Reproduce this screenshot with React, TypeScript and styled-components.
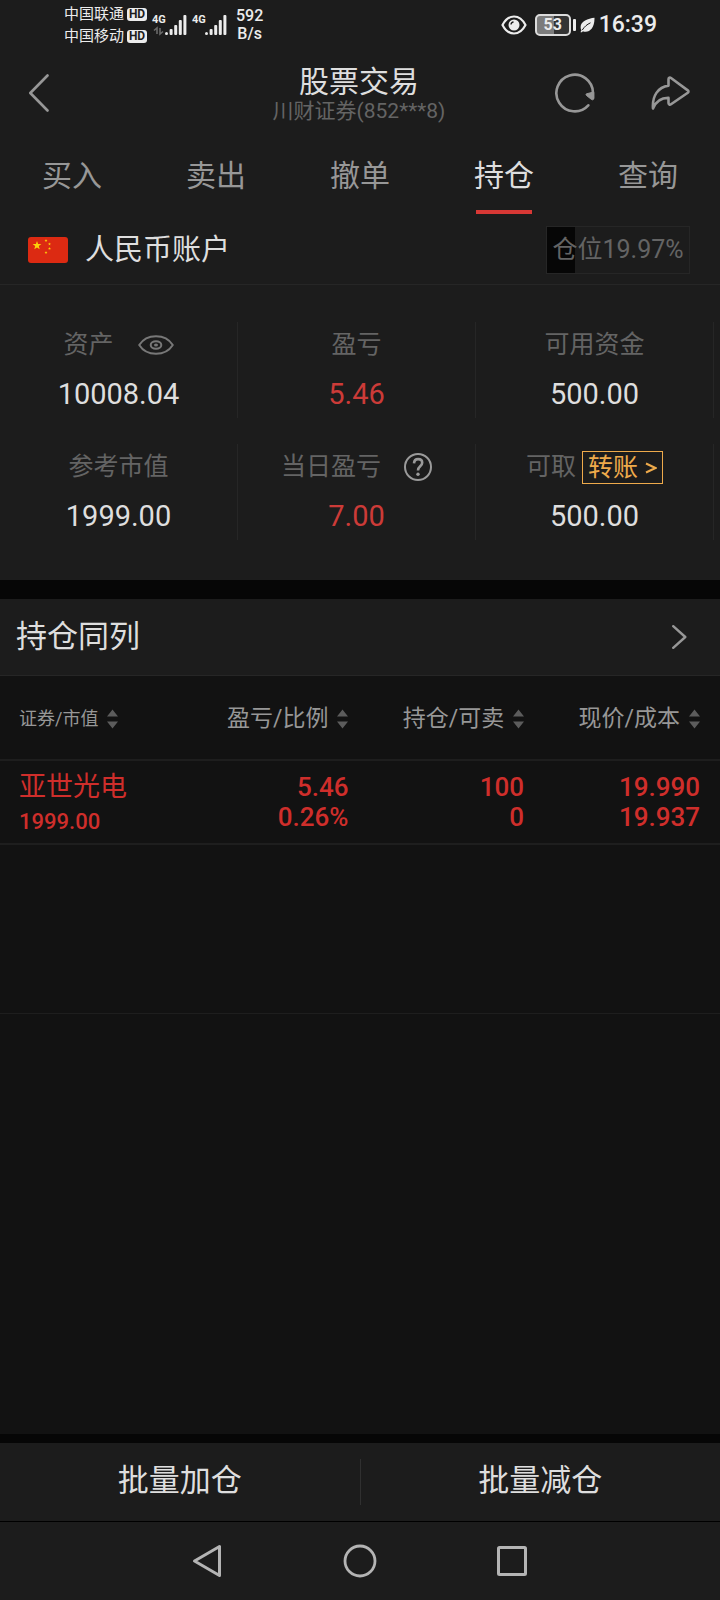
import React from "react";
import styled, { createGlobalStyle } from "styled-components";

const color = {
  panel: "#1c1c1c",
  list: "#121212",
  band: "#060606",
  line: "#262626",
  text: "#dedede",
  muted: "#979797",
  dim: "#646464",
  up: "#cc3b38",
  active: "#d83835",
  rowUp: "#cf2e2b",
  accent: "#eeaa4b",
};

const GlobalStyle = createGlobalStyle`
  *, *::before, *::after { box-sizing: border-box; }
  body {
    margin: 0;
    background: ${color.panel};
    color: ${color.text};
    font-family: Roboto, "Noto Sans CJK SC", sans-serif;
  }
  button {
    margin: 0;
    padding: 0;
    border: 0;
    background: none;
    color: inherit;
    font: inherit;
    cursor: pointer;
  }
  svg { display: block; flex: none; }
`;

const Page = styled.div`
  display: flex;
  flex-direction: column;
  min-height: 100vh;
`;

/* Status bar */

const StatusBar = styled.div`
  display: flex;
  align-items: center;
  justify-content: space-between;
  height: 50px;
  padding: 0 63px 0 64px;
  color: #ececec;
`;

const StatusGroup = styled.div<{ $gap: number }>`
  display: flex;
  align-items: center;
  gap: ${(p) => p.$gap}px;
`;

const Carriers = styled.div`
  display: flex;
  flex-direction: column;
  font-size: 15px;
  line-height: 22px;
`;

const Carrier = styled.div`
  display: flex;
  align-items: center;
  gap: 3px;
`;

const HdTag = styled.span`
  width: 20px;
  height: 13px;
  border-radius: 3px;
  background: #ececec;
  color: ${color.panel};
  font-size: 12px;
  font-weight: 700;
  line-height: 13px;
  text-align: center;
`;

const SignalBox = styled.div`
  display: flex;
`;

const NetType = styled.span`
  width: 13px;
  font-size: 11px;
  font-weight: 700;
  line-height: 12px;
`;

const Speed = styled.div`
  padding-left: 4px;
  font-size: 16px;
  font-weight: 500;
  line-height: 18px;
  text-align: center;
`;

const Battery = styled.div`
  display: flex;
  align-items: center;
  gap: 2px;

  &::after {
    content: "";
    width: 3px;
    height: 12px;
    border-radius: 1px;
    background: #ececec;
  }
`;

const BatteryBody = styled.span`
  width: 36px;
  height: 22px;
  border: 2px solid #dcdcdc;
  border-radius: 5px;
  background: linear-gradient(90deg, #7c7c7c 53%, #343434 53%);
  font-size: 16px;
  font-weight: 700;
  line-height: 18px;
  text-align: center;
`;

const Clock = styled.time`
  font-size: 23px;
  font-weight: 500;
  line-height: 28px;
`;

/* Header and tabs */

const Header = styled.header`
  display: grid;
  grid-template-columns: 1fr auto 1fr;
  align-items: center;
  height: 86px;
  padding: 0 30px 0 28px;
`;

const Heading = styled.div`
  text-align: center;
`;

const Title = styled.h1`
  margin: 0;
  font-size: 30px;
  font-weight: 400;
  line-height: 36px;
`;

const Subtitle = styled.p`
  margin: 0;
  color: ${color.dim};
  font-size: 21px;
  line-height: 22px;
`;

const HeaderActions = styled.div<{ $end?: boolean }>`
  display: flex;
  align-items: center;
  justify-content: ${(p) => (p.$end ? "flex-end" : "flex-start")};
  gap: 56px;
`;

const Tabs = styled.nav`
  display: grid;
  grid-template-columns: repeat(5, 1fr);
`;

const Tab = styled.button<{ $active: boolean }>`
  display: flex;
  flex-direction: column;
  align-items: center;
  padding-top: 20px;
  color: ${(p) => (p.$active ? color.text : color.muted)};
  font-size: 30px;
  line-height: 40px;

  &::after {
    content: "";
    width: 56px;
    height: 4px;
    margin-top: 14px;
    background: ${(p) => (p.$active ? color.active : "transparent")};
  }
`;

/* Account summary */

const AccountRow = styled.div`
  display: flex;
  align-items: center;
  gap: 17px;
  height: 71px;
  padding: 2px 30px 0 28px;
  border-bottom: 1px solid ${color.line};
`;

const AccountName = styled.h2`
  flex: 1;
  margin: 0;
  font-size: 29px;
  font-weight: 400;
  line-height: 40px;
`;

const PositionMeter = styled.div<{ $percent: number }>`
  width: 144px;
  border: 1px solid ${color.line};
  background: linear-gradient(
    90deg,
    ${color.band} ${(p) => p.$percent}%,
    transparent ${(p) => p.$percent}%
  );
  color: ${color.dim};
  font-size: 25px;
  line-height: 46px;
  text-align: center;
`;

const Stats = styled.section`
  display: grid;
  grid-template-columns: repeat(3, 1fr);
  row-gap: 26px;
  padding: 37px 6px 40px 0;
`;

const Stat = styled.div`
  display: flex;
  flex-direction: column;
  align-items: center;
  gap: 14px;
  height: 96px;
  padding-top: 6px;
  border-right: 1px solid ${color.line};
`;

const StatLabel = styled.div<{ $gap?: number }>`
  display: flex;
  align-items: center;
  gap: ${(p) => p.$gap ?? 0}px;
  height: 34px;
  color: ${color.dim};
  font-size: 25px;
  line-height: 34px;
  white-space: nowrap;
`;

const StatValue = styled.div<{ $up?: boolean }>`
  color: ${(p) => (p.$up ? color.up : color.text)};
  font-size: 29px;
  line-height: 36px;
`;

const TransferButton = styled.button`
  display: flex;
  align-items: center;
  gap: 7px;
  height: 33px;
  padding: 1px 5px 0;
  border: 1px solid ${color.accent};
  color: ${color.accent};
  line-height: 30px;
`;

const Band = styled.div<{ $size: number }>`
  height: ${(p) => p.$size}px;
  background: ${color.band};
`;

/* Holdings */

const SectionRow = styled.button`
  display: flex;
  align-items: center;
  justify-content: space-between;
  height: 76px;
  padding: 0 33px 0 16px;
  font-size: 31px;
  line-height: 40px;
  text-align: left;
`;

const Holdings = styled.main`
  flex: 1;
  border-top: 1px solid ${color.line};
  background: ${color.list};
`;

const Table = styled.table`
  width: 100%;
  border-collapse: collapse;
  table-layout: fixed;
`;

const HeadCell = styled.th<{ $first?: boolean; $last?: boolean }>`
  width: ${(p) => (p.$first ? "24%" : p.$last ? "auto" : "24.4%")};
  height: 84px;
  padding: 2px ${(p) => (p.$last ? 20 : 0)}px 0 ${(p) => (p.$first ? 19 : 0)}px;
  border-bottom: 2px solid #1e1e1e;
  color: ${color.muted};
  font-weight: 400;
  text-align: ${(p) => (p.$first ? "left" : "right")};
`;

const SortButton = styled.button<{ $small?: boolean }>`
  display: inline-flex;
  align-items: center;
  gap: 9px;
  font-size: ${(p) => (p.$small ? 18 : 23)}px;
  line-height: 32px;
  white-space: nowrap;
  vertical-align: middle;
`;

const Cell = styled.td<{ $first?: boolean; $last?: boolean }>`
  height: 84px;
  padding: 11px ${(p) => (p.$last ? 20 : 0)}px 0 ${(p) => (p.$first ? 19 : 0)}px;
  border-bottom: 2px solid #1e1e1e;
  color: ${color.rowUp};
  font-size: 26px;
  font-weight: 500;
  line-height: 30px;
  text-align: ${(p) => (p.$first ? "left" : "right")};
  vertical-align: top;
`;

const StockName = styled.div`
  font-size: 27px;
  font-weight: 400;
  line-height: 30px;
`;

const MarketValue = styled.div`
  font-size: 22px;
  line-height: 40px;
`;

const ListEnd = styled.div`
  height: 169px;
  border-bottom: 1px solid #1e1e1e;
`;

/* Bottom actions and navigation */

const Actions = styled.div`
  display: grid;
  grid-template-columns: 1fr 1px 1fr;
  align-items: center;
  height: 79px;
  border-bottom: 1px solid #000;
`;

const Divider = styled.span`
  height: 46px;
  background: #303030;
`;

const ActionButton = styled.button`
  height: 78px;
  padding-bottom: 2px;
  font-size: 31px;
  line-height: 40px;
`;

const NavBar = styled.nav`
  display: flex;
  align-items: center;
  justify-content: center;
  gap: 120px;
  height: 78px;
  padding-right: 3px;
`;

const Signal = ({ data }: { data?: boolean }) => (
  <SignalBox>
    <NetType>4G</NetType>
    <svg width="22" height="22" viewBox="0 0 22 22" fill="#ececec" overflow="visible">
      <circle cx="1.5" cy="19.5" r="1.5" />
      <rect x="4.6" y="15" width="3" height="6" rx="1" />
      <rect x="9.2" y="11" width="3" height="10" rx="1" />
      <rect x="13.800" y="6" width="3" height="15" rx="1" />
      <rect x="18.400" y="1" width="3" height="20" rx="1" />
      {data && (
        <path d="M-11 16.500l3-2.500v6M-5 14v6l3-2.500" fill="none" stroke="#6a6a6a" strokeWidth="1.600" />
      )}
    </svg>
  </SignalBox>
);

const EyeStatus = () => (
  <svg width="30" height="20" viewBox="0 0 30 20" fill="none">
    <path
      d="M1.500 10C4.500 4.200 8.500 1.500 13 1.500S21.500 4.200 24.500 10C21.500 15.800 17.500 18.500 13 18.500S4.500 15.800 1.500 10z"
      stroke="#ececec"
      strokeWidth="2.200"
      strokeLinejoin="round"
    />
    <circle cx="13" cy="10" r="5.500" fill="#ececec" />
    <path d="M10 9.500a2.800 2.800 0 0 1 2.500-2.500" stroke="#1c1c1c" strokeWidth="1.300" />
  </svg>
);

const Leaf = () => (
  <svg width="15" height="16" viewBox="0 0 15 16">
    <path
      d="M14.500.8C8 1.500.600 4 .600 10.200c0 1.300.300 2.300.900 3.100-.500.700-.800 1.300-1 1.900h1.500l.800-1C8.500 16.500 14.800 12 14.500.800z"
      fill="#ececec"
    />
    <path d="M2.300 13C4.500 9.500 7 7.500 10.500 5.800" fill="none" stroke="#1c1c1c" strokeWidth="1" />
  </svg>
);

const BackIcon = () => (
  <svg width="21" height="38" viewBox="0 0 21 38" fill="none">
    <path d="M19.500 1.500L2.300 19l17.200 17.500" stroke="#979797" strokeWidth="2.600" strokeLinecap="round" strokeLinejoin="round" />
  </svg>
);

const RefreshIcon = () => (
  <svg width="40" height="40" viewBox="0 0 40 40" fill="none">
    <path d="M33.300 32.300A18.300 18.300 0 1 1 38 20v5" stroke="#979797" strokeWidth="2.600" strokeLinecap="round" />
    <path d="M31.500 20.800l7.200-1.800v7c-.500 1-1.500 1-2.300.400l-5-4c-.600-.600-.500-1.400.100-1.600z" fill="#979797" stroke="#979797" strokeLinejoin="round" />
  </svg>
);

const ShareIcon = () => (
  <svg width="39" height="34" viewBox="0 0 39 34" fill="none">
    <path
      d="M17.500 9.600V3.200c0-1.500 1.400-2 2.500-1.200l16.800 12.400c.9.700.9 1.600 0 2.300L20 28.300c-1.100.8-2.500.2-2.500-1.200v-5.200C10 21.800 5 25 2 32.500 1 20 7 11 17.500 9.600z"
      stroke="#979797"
      strokeWidth="2.600"
      strokeLinejoin="round"
    />
  </svg>
);

const STAR = "M0-4.600L1.100-1.500 4.400-1.400 1.800.6 2.700 3.700 0 1.900-2.700 3.700-1.800.6-4.400-1.400-1.100-1.500z";

const Flag = () => (
  <svg width="40" height="26" viewBox="0 0 40 26">
    <rect width="40" height="26" rx="3" fill="#dc2a12" />
    <g fill="#fcd20a">
      <path d={STAR} transform="translate(9 8.500)" />
      <path d={STAR} transform="translate(18 3.500) scale(.33)" />
      <path d={STAR} transform="translate(21.500 7) scale(.33)" />
      <path d={STAR} transform="translate(21.500 11.500) scale(.33)" />
      <path d={STAR} transform="translate(18 15.500) scale(.33)" />
    </g>
  </svg>
);

const EyeIcon = () => (
  <svg width="36" height="20" viewBox="0 0 36 20" fill="none" stroke="#787878" strokeWidth="2">
    <path d="M1.200 10C5 4 11 1.200 18 1.200S31 4 34.800 10C31 16 25 18.800 18 18.800S5 16 1.200 10z" strokeLinejoin="round" />
    <ellipse cx="18" cy="10" rx="5.300" ry="3.800" />
    <ellipse cx="18" cy="10" rx="1" ry=".5" />
  </svg>
);

const HelpIcon = () => (
  <svg width="28" height="28" viewBox="0 0 28 28" fill="none" stroke="#9a9a9a">
    <circle cx="14" cy="14" r="13" strokeWidth="2" />
    <path d="M10 10.300c.2-2.700 1.800-4.200 4.100-4.200 2.400 0 4.100 1.500 4.100 3.700 0 3.500-4.200 3.600-4.200 7.600" strokeWidth="2.600" />
    <circle cx="14" cy="21.200" r="1.700" fill="#9a9a9a" stroke="none" />
  </svg>
);

const GreaterIcon = () => (
  <svg width="12" height="12" viewBox="0 0 12 12" fill="none">
    <path d="M1 1.500L10.500 6 1 10.500" stroke="#eeaa4b" strokeWidth="2" />
  </svg>
);

const ChevronRight = () => (
  <svg width="15" height="24" viewBox="0 0 15 24" fill="none">
    <path d="M1.200 1.200L13.300 12 1.200 22.800" stroke="#979797" strokeWidth="2.400" strokeLinecap="round" strokeLinejoin="round" />
  </svg>
);

const SortIcon = () => (
  <svg width="11" height="20" viewBox="0 0 11 20" fill="#5c5c5c">
    <path d="M0 7.500L5.500.5 11 7.500zM0 12.500h11L5.500 19.500z" />
  </svg>
);

const tabs = ["买入", "卖出", "撤单", "持仓", "查询"];
const columns = ["证券/市值", "盈亏/比例", "持仓/可卖", "现价/成本"];

export default function App() {
  return (
    <Page>
      <GlobalStyle />
      <StatusBar>
        <StatusGroup $gap={5}>
          <Carriers>
            {["中国联通", "中国移动"].map((name) => (
              <Carrier key={name}>
                {name}
                <HdTag>HD</HdTag>
              </Carrier>
            ))}
          </Carriers>
          <Signal data />
          <Signal />
          <Speed>
            592
            <br />
            B/s
          </Speed>
        </StatusGroup>
        <StatusGroup $gap={4}>
          <EyeStatus />
          <Battery>
            <BatteryBody>53</BatteryBody>
          </Battery>
          <Leaf />
          <Clock>16:39</Clock>
        </StatusGroup>
      </StatusBar>

      <Header>
        <HeaderActions>
          <button aria-label="返回">
            <BackIcon />
          </button>
        </HeaderActions>
        <Heading>
          <Title>股票交易</Title>
          <Subtitle>川财证券(852***8)</Subtitle>
        </Heading>
        <HeaderActions $end>
          <button aria-label="刷新">
            <RefreshIcon />
          </button>
          <button aria-label="分享">
            <ShareIcon />
          </button>
        </HeaderActions>
      </Header>

      <Tabs>
        {tabs.map((tab) => (
          <Tab key={tab} $active={tab === "持仓"}>
            {tab}
          </Tab>
        ))}
      </Tabs>

      <AccountRow>
        <Flag />
        <AccountName>人民币账户</AccountName>
        <PositionMeter $percent={19.97}>仓位19.97%</PositionMeter>
      </AccountRow>

      <Stats>
        <Stat>
          <StatLabel $gap={24}>
            资产
            <button aria-label="隐藏金额">
              <EyeIcon />
            </button>
          </StatLabel>
          <StatValue>10008.04</StatValue>
        </Stat>
        <Stat>
          <StatLabel>盈亏</StatLabel>
          <StatValue $up>5.46</StatValue>
        </Stat>
        <Stat>
          <StatLabel>可用资金</StatLabel>
          <StatValue>500.00</StatValue>
        </Stat>
        <Stat>
          <StatLabel>参考市值</StatLabel>
          <StatValue>1999.00</StatValue>
        </Stat>
        <Stat>
          <StatLabel $gap={23}>
            当日盈亏
            <button aria-label="说明">
              <HelpIcon />
            </button>
          </StatLabel>
          <StatValue $up>7.00</StatValue>
        </Stat>
        <Stat>
          <StatLabel $gap={6}>
            可取
            <TransferButton>
              转账
              <GreaterIcon />
            </TransferButton>
          </StatLabel>
          <StatValue>500.00</StatValue>
        </Stat>
      </Stats>

      <Band $size={19} />

      <SectionRow>
        持仓同列
        <ChevronRight />
      </SectionRow>

      <Holdings>
        <Table>
          <thead>
            <tr>
              {columns.map((name, i) => (
                <HeadCell key={name} scope="col" $first={i === 0} $last={i === 3}>
                  <SortButton $small={i === 0}>
                    {name}
                    <SortIcon />
                  </SortButton>
                </HeadCell>
              ))}
            </tr>
          </thead>
          <tbody>
            <tr>
              <Cell $first>
                <StockName>亚世光电</StockName>
                <MarketValue>1999.00</MarketValue>
              </Cell>
              <Cell>
                <div>5.46</div>
                <div>0.26%</div>
              </Cell>
              <Cell>
                <div>100</div>
                <div>0</div>
              </Cell>
              <Cell $last>
                <div>19.990</div>
                <div>19.937</div>
              </Cell>
            </tr>
          </tbody>
        </Table>
        <ListEnd />
      </Holdings>

      <Band $size={9} />

      <Actions>
        <ActionButton>批量加仓</ActionButton>
        <Divider />
        <ActionButton>批量减仓</ActionButton>
      </Actions>

      <NavBar>
        <button aria-label="后退">
          <svg width="32" height="34" viewBox="0 0 32 34" fill="none">
            <path d="M28.500 2.500v29L3.500 17z" stroke="#b4b4b4" strokeWidth="3" strokeLinejoin="round" />
          </svg>
        </button>
        <button aria-label="主页">
          <svg width="34" height="34" viewBox="0 0 34 34" fill="none">
            <circle cx="17" cy="17" r="15" stroke="#b4b4b4" strokeWidth="2.800" />
          </svg>
        </button>
        <button aria-label="最近任务">
          <svg width="30" height="30" viewBox="0 0 30 30" fill="none">
            <rect x="1.500" y="1.500" width="27" height="27" rx="1" stroke="#b4b4b4" strokeWidth="3" />
          </svg>
        </button>
      </NavBar>
    </Page>
  );
}
